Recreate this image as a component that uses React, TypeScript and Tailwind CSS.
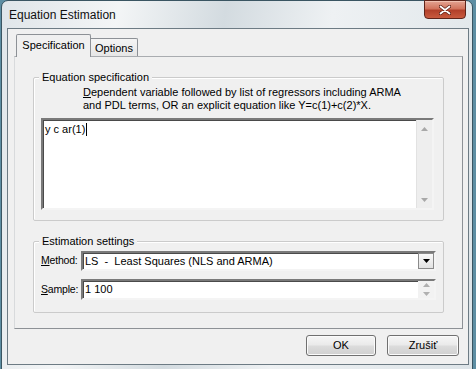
import type { ReactNode } from 'react';

const sunken =
  'border-2 border-t-[#7a7a7a] border-l-[#7a7a7a] border-b-[#f4f4f4] border-r-[#f4f4f4] shadow-[inset_1px_1px_0_#4a4a4a] bg-white';

function GroupBox({ label, className, children }: { label: string; className: string; children: ReactNode }) {
  return (
    <div className={`relative ml-[18px] w-[411px] rounded-[2px] border border-[#cbcbcb] shadow-[inset_1px_1px_0_#ffffff] ${className}`}>
      <span className="absolute left-[5px] top-[-8px] bg-[#f0f0f0] px-[3px] leading-[14px]">{label}</span>
      {children}
    </div>
  );
}

function Triangle({ dir, color }: { dir: 'up' | 'down'; color: string }) {
  return (
    <svg width="7" height="4" viewBox="0 0 7 4">
      {dir === 'down' ? <path d="M0 0h7L3.5 4z" fill={color} /> : <path d="M0 4h7L3.5 0z" fill={color} />}
    </svg>
  );
}

function TitleBar() {
  return (
    <div className="relative flex h-[27px] items-center pl-[2px]">
      <span className="text-[12px] leading-none text-[#101010]">Equation Estimation</span>
      <div className="absolute right-[3px] top-[-1px] flex h-[19px] w-[42px] items-center justify-center rounded-b-[4px] border border-[#5e241a] bg-[linear-gradient(180deg,#e4a493_0%,#d2745d_45%,#b2402a_55%,#c85a3e_100%)] shadow-[inset_0_1px_0_#f0c0b0]">
        <svg width="12" height="10" viewBox="0 0 12 10">
          <path d="M1.5 1.5l9 7M10.5 1.5l-9 7" stroke="#5a1e14" strokeWidth="3.4" strokeLinecap="round" />
          <path d="M1.5 1.5l9 7M10.5 1.5l-9 7" stroke="#ffffff" strokeWidth="1.8" strokeLinecap="round" />
        </svg>
      </div>
    </div>
  );
}

function Button({ label, className }: { label: string; className: string }) {
  return (
    <div
      className={`flex h-[21px] items-center justify-center rounded-[3px] border border-[#707070] bg-[linear-gradient(180deg,#f6f6f6_0%,#eaeaea_48%,#dcdcdc_52%,#d0d0d0_100%)] shadow-[inset_0_0_0_1px_#fbfbfb] ${className}`}
    >
      {label}
    </div>
  );
}

export default function App() {
  return (
    <div className="h-[369px] w-[476px] overflow-hidden bg-[#5d8ea3] font-['Liberation_Sans',Arial,sans-serif] text-[11px] text-black">
      <div className="ml-[1px] h-[380px] w-[472px] rounded-t-[7px] border border-[#3a5562] bg-[linear-gradient(100deg,#dfe5e9_0%,#f3f5f6_22%,#d3dbe0_42%,#eef1f3_62%,#dde4e8_100%)] pl-[5px] pr-[3px]">
        <TitleBar />

        {/* client area */}
        <div className="h-[337px] border border-[#6d7b84] bg-[#f0f0f0] pt-[5px]">
          {/* tabs */}
          <div className="ml-[6px] flex h-[22px] items-end">
            <div className="relative z-10 -mb-px ml-[2px] flex h-[23px] w-[75px] items-center justify-center rounded-t-[2px] border border-b-0 border-[#8d9196] bg-[#f0f0f0] pb-[2px]">
              Specification
            </div>
            <div className="flex h-[18px] w-[47px] items-center justify-center rounded-tr-[2px] border border-b-0 border-l-0 border-[#8d9196] bg-[linear-gradient(180deg,#f4f4f4,#e6e6e6)] pt-[1px]">
              Options
            </div>
          </div>

          {/* tab panel */}
          <div className="ml-[6px] h-[273px] w-[449px] border border-[#8d9196] border-l-[#d8dadc] border-t-[#a9acb0] pt-[20px]">
            <GroupBox label="Equation specification" className="h-[144px]">
              <div className="pl-[49px] pt-[8px] leading-[13px]">
                <div>
                  <span className="underline">D</span>ependent variable followed by list of regressors including ARMA
                </div>
                <div>and PDL terms, OR an explicit equation like Y=c(1)+c(2)*X.</div>
              </div>
              <div className={`ml-[7px] mt-[6px] flex h-[92px] w-[393px] ${sunken}`}>
                <div className="flex flex-1 items-start pl-[2px] pt-[2px] leading-[14px]">
                  y c ar(1)
                  <span className="ml-[1px] mt-[1px] h-[13px] w-px bg-black" />
                </div>
                <div className="flex w-[16px] flex-col items-center justify-between bg-[#eeeeee] pb-[6px] pt-[7px] shadow-[inset_1px_0_0_#e2e2e2]">
                  <Triangle dir="up" color="#a8a8a8" />
                  <Triangle dir="down" color="#a8a8a8" />
                </div>
              </div>
            </GroupBox>

            <GroupBox label="Estimation settings" className="mt-[20px] h-[72px]">
              <div className="flex items-center pl-[7px] pt-[9px]">
                <span className="w-[40px] whitespace-nowrap text-[10.5px] tracking-[-0.2px]">
                  <span className="underline">M</span>ethod:
                </span>
                <div className={`flex h-[20px] w-[355px] items-center ${sunken}`}>
                  <span className="flex-1 pl-[2px]">LS&nbsp; -&nbsp; Least Squares (NLS and ARMA)</span>
                  <div className="flex h-full w-[16px] items-center justify-center border border-[#8a8a8a] bg-[linear-gradient(180deg,#fafafa,#e2e2e2)]">
                    <Triangle dir="down" color="#000000" />
                  </div>
                </div>
              </div>
              <div className="mt-[8px] flex items-center pl-[7px]">
                <span className="w-[40px] whitespace-nowrap text-[10.5px] tracking-[-0.2px]">
                  <span className="underline">S</span>ample:
                </span>
                <div className={`flex h-[21px] w-[355px] items-center ${sunken}`}>
                  <span className="flex-1 pl-[2px]">1 100</span>
                  <div className="flex h-full w-[16px] flex-col items-center justify-center gap-[5px] bg-[#f2f2f2]">
                    <Triangle dir="up" color="#b0b0b0" />
                    <Triangle dir="down" color="#b0b0b0" />
                  </div>
                </div>
              </div>
            </GroupBox>
          </div>

          {/* buttons */}
          <div className="mt-[6px] flex justify-end gap-[11px] pr-[9px]">
            <Button label="OK" className="w-[70px]" />
            <Button label="Zrušiť" className="w-[72px]" />
          </div>
        </div>
      </div>
    </div>
  );
}
